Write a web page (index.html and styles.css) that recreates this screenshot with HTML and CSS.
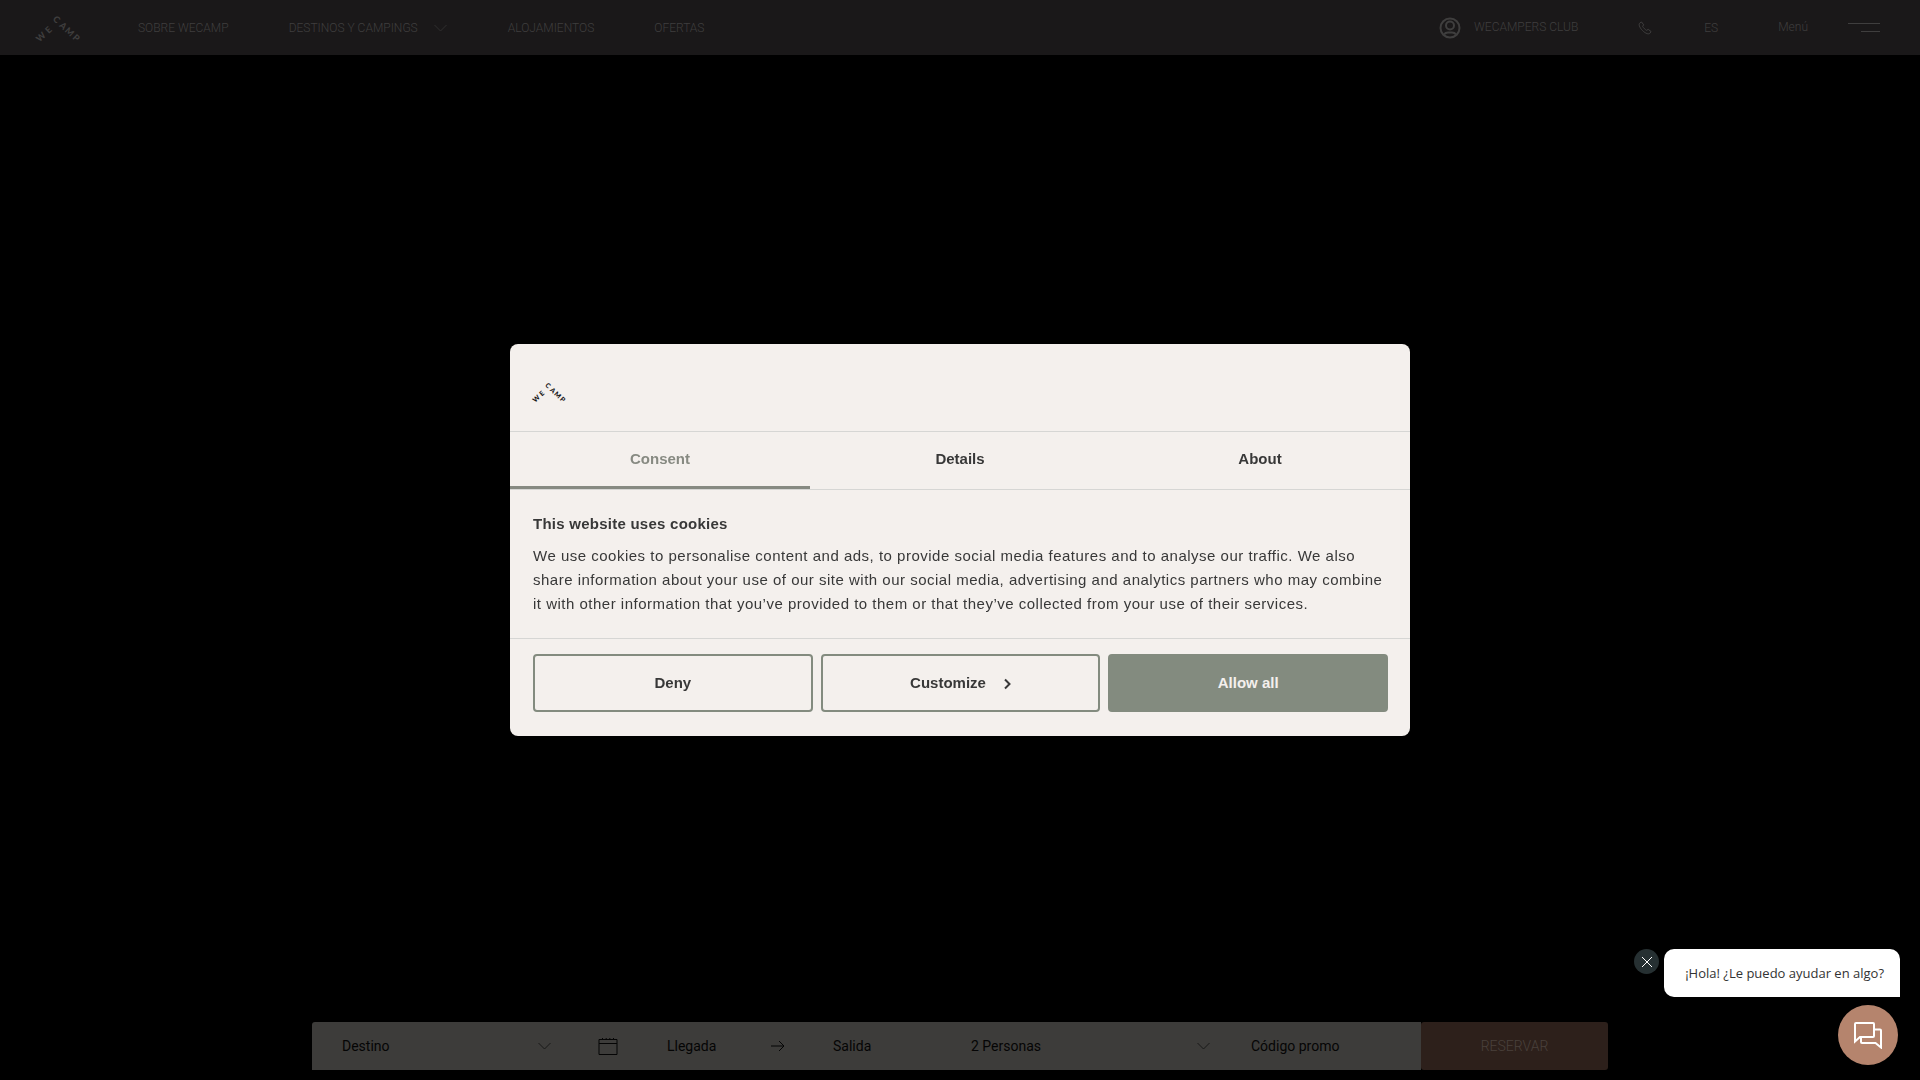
FILE: index.html
```html
<!DOCTYPE html>
<html lang="es">
<head>
<meta charset="utf-8">
<meta name="viewport" content="width=device-width, initial-scale=1">
<title>WeCamp</title>
<link rel="stylesheet" href="styles.css">
</head>
<body>
<header class="site-header">
  <a class="logo" href="#" aria-label="WeCamp">
    <svg class="logo-mark" viewBox="0 0 48 32" role="img" aria-label="We Camp">
      <g class="logo-letters">
        <text transform="translate(7 25) rotate(-43)" y="3">W</text>
        <text transform="translate(14.500 18) rotate(-43)" y="3">E</text>
        <text transform="translate(22.500 7.500) rotate(43)" y="3">C</text>
        <text transform="translate(29 14) rotate(43)" y="3">A</text>
        <text transform="translate(35.500 20) rotate(43)" y="3">M</text>
        <text transform="translate(42 26) rotate(43)" y="3">P</text>
      </g>
    </svg>
  </a>
  <nav class="main-nav">
    <a href="#">SOBRE WECAMP</a>
    <a class="has-menu" href="#">DESTINOS Y CAMPINGS
      <svg class="chevron" viewBox="0 0 14 8"><path d="M1 1l6 6 6-6"/></svg>
    </a>
    <a href="#">ALOJAMIENTOS</a>
    <a href="#">OFERTAS</a>
  </nav>
  <div class="tools">
    <a class="club" href="#">
      <svg class="user-icon" viewBox="0 0 22 22"><circle cx="11" cy="11" r="9.500"/><circle cx="11" cy="8.500" r="4"/><path d="M5 17.500c1-1.600 2.300-2 4-2h4c1.700 0 3 .4 4 2"/></svg>
      <span class="tool-label">WECAMPERS CLUB</span>
    </a>
    <a class="phone" href="#" aria-label="Teléfono">
      <svg class="phone-icon" viewBox="0 0 14 14"><path d="M3.500 1L1.800 2C.4 3.400 1.300 6.300 4.500 9.500s6.100 4.100 7.500 2.700l1-1.700-2.800-2.200-1.500 1.100C7.500 9 5 6.500 4.600 5.300l1.100-1.500z"/></svg>
    </a>
    <a class="lang" href="#">ES</a>
    <button class="menu-button" type="button">
      <span class="tool-label">Menú</span>
      <svg class="burger" viewBox="0 0 32 9"><path d="M0 .5h32M13 8.500h19"/></svg>
    </button>
  </div>
</header>

<main class="hero"></main>

<form class="booking">
  <div class="booking-fields">
    <div class="field destination">
      <select aria-label="Destino"><option>Destino</option></select>
      <svg class="chevron" viewBox="0 0 14 8"><path d="M1 1l6 6 6-6"/></svg>
    </div>
    <div class="field dates">
      <svg class="calendar" viewBox="0 0 20 18"><path d="M1 2.500h18v15H1zM1 6.500h18M4.500 1v2M8.200 1v2M11.800 1v2M15.500 1v2"/></svg>
      <input class="date" type="text" placeholder="Llegada" aria-label="Llegada">
      <svg class="arrow" viewBox="0 0 14 12"><path d="M0 6h13M8 1l5 5-5 5"/></svg>
      <input class="date" type="text" placeholder="Salida" aria-label="Salida">
    </div>
    <div class="field guests">
      <select aria-label="Personas"><option>2 Personas</option></select>
      <svg class="chevron" viewBox="0 0 14 8"><path d="M1 1l6 6 6-6"/></svg>
    </div>
    <div class="field promo">
      <input type="text" placeholder="Código promo" aria-label="Código promo">
    </div>
  </div>
  <button class="reserve" type="submit">RESERVAR</button>
</form>

<div class="overlay">
  <section class="consent" role="dialog" aria-labelledby="consent-title">
    <div class="consent-head">
      <svg class="consent-logo" viewBox="0 0 48 32" role="img" aria-label="We Camp">
        <g class="logo-letters">
          <text transform="translate(7 25) rotate(-43)" y="3">W</text>
          <text transform="translate(14.500 18) rotate(-43)" y="3">E</text>
          <text transform="translate(22.500 7.500) rotate(43)" y="3">C</text>
          <text transform="translate(29 14) rotate(43)" y="3">A</text>
          <text transform="translate(35.500 20) rotate(43)" y="3">M</text>
          <text transform="translate(42 26) rotate(43)" y="3">P</text>
        </g>
      </svg>
    </div>
    <div class="tabs" role="tablist">
      <button class="tab active" type="button" role="tab" aria-selected="true">Consent</button>
      <button class="tab" type="button" role="tab">Details</button>
      <button class="tab" type="button" role="tab">About</button>
    </div>
    <div class="consent-body">
      <h2 id="consent-title">This website uses cookies</h2>
      <p>We use cookies to personalise content and ads, to provide social media features and to analyse our traffic. We also share information about your use of our site with our social media, advertising and analytics partners who may combine it with other information that you’ve provided to them or that they’ve collected from your use of their services.</p>
    </div>
    <div class="consent-actions">
      <button class="choice" type="button">Deny</button>
      <button class="choice" type="button">Customize
        <svg class="caret" viewBox="0 0 7 16"><path d="M1 5.500l4.500 4.500L1 14.500"/></svg>
      </button>
      <button class="choice primary" type="button">Allow all</button>
    </div>
  </section>
</div>

<aside class="chat">
  <div class="chat-hint">
    <button class="chat-close" type="button" aria-label="Cerrar">
      <svg viewBox="0 0 12 12"><path d="M1 1l10 10M11 1L1 11"/></svg>
    </button>
    <p class="chat-bubble">¡Hola! ¿Le puedo ayudar en algo?</p>
  </div>
  <button class="chat-open" type="button" aria-label="Abrir chat">
    <svg viewBox="0 0 30 28"><path d="M3 2h17q1 0 1 1v12q0 1-1 1H7l-5 4.500V3q0-1 1-1zM21 8.500h6q1 0 1 1v17L22.500 22H9q-1 0-1-1v-5"/></svg>
  </button>
</aside>
</body>
</html>
```

FILE: styles.css
```css
*, *::before, *::after { box-sizing: border-box; }

body {
  margin: 0;
  min-height: 100vh;
  display: flex;
  flex-direction: column;
  background: #000;
  font-family: Roboto, sans-serif;
  font-size: 14px;
}

a { color: inherit; text-decoration: none; }
button, input, select { font: inherit; color: inherit; }
button { padding: 0; border: 0; background: none; }
svg { display: block; flex: none; fill: none; stroke: currentColor; }

/* Header */
.site-header {
  display: flex;
  align-items: center;
  height: 55px;
  padding: 0 40px 0 34px;
  background: #1a1819;
  color: #3f3e3e;
  font-size: 12px;
  font-weight: 300;
}
.logo-mark { width: 48px; height: 32px; }
.logo-letters {
  fill: currentColor;
  stroke: none;
  font: 900 9px Lato, sans-serif;
  text-anchor: middle;
}
.main-nav { display: flex; gap: 60px; margin-left: 56px; }
.has-menu { display: flex; align-items: center; gap: 15px; }
.chevron { width: 15px; height: 8px; }
.main-nav .chevron { color: #302f2f; }
.tools { display: flex; align-items: center; margin-left: auto; }
.tool-label { padding-bottom: 2px; }
.club { display: flex; align-items: center; gap: 13px; }
.user-icon { width: 22px; height: 22px; stroke-width: 2; }
.phone { margin-left: 60px; }
.phone-icon { width: 14px; height: 14px; }
.lang { margin-left: 52px; }
.menu-button { display: flex; align-items: center; gap: 40px; margin-left: 60px; }
.burger { width: 32px; height: 9px; }

.hero { flex: 1; }

/* Booking bar */
.booking {
  display: flex;
  width: calc(100% - 40px);
  max-width: 1296px;
  height: 48px;
  margin: 0 auto 10px;
  color: #050505;
}
.booking-fields {
  flex: 1;
  display: flex;
  padding-left: 30px;
  background: #3d3c3a;
  border-radius: 3px 0 0 0;
}
.field { display: flex; align-items: center; }
.field select, .field input {
  min-width: 0;
  padding: 0;
  border: 0;
  background: none;
  appearance: none;
  opacity: 1;
}
.field select { flex: 1; }
.field ::placeholder { color: inherit; opacity: 1; }
.field .chevron { color: #191918; }
.destination { width: 210px; }
.dates { margin-left: 46px; }
.calendar { width: 20px; height: 18px; margin-right: 49px; }
.date { width: 104px; }
.arrow { width: 14px; height: 12px; margin-right: 48px; }
.guests { width: 240px; margin-left: 34px; }
.promo { flex: 1; margin-left: 40px; }
.promo input { width: 100%; }
.reserve {
  width: 187px;
  border-radius: 3px;
  background: #2d201b;
  color: #4a403c;
  font-weight: 300;
}

/* Cookie consent */
.overlay {
  position: fixed;
  inset: 0;
  display: flex;
  align-items: center;
  justify-content: center;
}
.consent {
  width: 900px;
  max-width: 94%;
  border-radius: 8px;
  background: #f4f0ed;
  color: #383838;
  font-family: "Liberation Sans", Arial, sans-serif;
  font-size: 15px;
}
.consent-head { padding: 36px 21px 27px; border-bottom: 1px solid #d6d6d4; }
.consent-logo { width: 36px; height: 24px; color: #141414; }
.tabs { display: flex; border-bottom: 1px solid #d6d6d4; }
.tab {
  flex: 1;
  height: 57px;
  padding-bottom: 1px;
  border-bottom: 3px solid transparent;
  font-weight: 700;
}
.tab.active { color: #878a82; border-color: #878a82; }
.consent-body { padding: 22px 22px 22px 23px; border-bottom: 1px solid #d6d6d4; }
.consent-body h2 { margin: 0 0 8px; font-size: 15px; line-height: 24px; letter-spacing: 0.25px; }
.consent-body p { margin: 0; line-height: 24px; letter-spacing: 0.5px; }
.consent-actions { display: flex; gap: 8px; padding: 15px 22px 24px 23px; }
.choice {
  flex: 1;
  display: flex;
  align-items: center;
  justify-content: center;
  gap: 18px;
  height: 58px;
  padding-bottom: 2px;
  border: 2px solid #838b7f;
  border-radius: 4px;
  font-weight: 700;
}
.choice.primary { background: #838b7f; color: #f4f0ed; }
.caret { width: 7px; height: 16px; stroke-width: 2; }

/* Chat */
.chat {
  position: fixed;
  right: 20px;
  bottom: 15px;
  display: flex;
  flex-direction: column;
  align-items: flex-end;
  gap: 8px;
}
.chat-hint { display: flex; align-items: flex-start; gap: 5px; }
.chat-close {
  display: grid;
  place-items: center;
  width: 25px;
  height: 25px;
  border-radius: 50%;
  background: #263032;
  color: #fff;
}
.chat-close svg { width: 12px; height: 12px; }
.chat-bubble {
  margin: 0;
  padding: 0 16px 0 21px;
  border-radius: 10px 10px 0 10px;
  background: #fff;
  color: #333;
  font: 13px/48px "Open Sans", sans-serif;
}
.chat-open {
  display: grid;
  place-items: center;
  width: 60px;
  height: 60px;
  margin-right: 2px;
  border-radius: 50%;
  background: #b5846d;
  color: #fff;
}
.chat-open svg { width: 30px; height: 28px; stroke-width: 2; }
```
